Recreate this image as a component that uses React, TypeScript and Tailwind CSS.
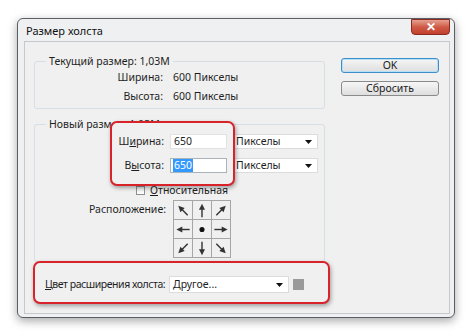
import type { ReactNode } from "react";

const ARROWS = [-45, 0, 45, -90, null, 90, -135, 180, 135];

const Arrow = ({ angle }: { angle: number | null }) => (
  <svg viewBox="0 0 19 19" className="h-[19px] w-[19px]">
    {angle === null ? (
      <circle cx="9.5" cy="9.5" r="2.7" fill="#111" />
    ) : (
      <g transform={`rotate(${angle} 9.5 9.5)`}>
        <line x1="9.5" y1="16.5" x2="9.5" y2="7" stroke="#333" strokeWidth="1.5" />
        <polygon points="9.5,2.5 6.3,8.8 12.7,8.8" fill="#333" />
      </g>
    )}
  </svg>
);

const Caret = () => (
  <svg viewBox="0 0 7 4" className="h-[4px] w-[7px]">
    <polygon points="0,0 7,0 3.5,4" fill="#111" />
  </svg>
);

const Select = ({ value, className }: { value: string; className: string }) => (
  <div
    className={`flex items-center justify-between border border-[#dcdcdc] bg-white pl-[3px] pr-[5px] ${className}`}
  >
    <span className="leading-none">{value}</span>
    <Caret />
  </div>
);

const Button = ({ children, primary }: { children: ReactNode; primary?: boolean }) => (
  <div
    className={`flex h-[15px] w-[98px] items-center justify-center rounded-[3px] border bg-gradient-to-b from-[#f6f6f6] to-[#dedede] leading-none text-[#1a1a1a] ${
      primary
        ? "border-[#3d8ec9] shadow-[inset_0_0_0_1px_#b6e0f5]"
        : "border-[#8a8a8a]"
    }`}
  >
    {children}
  </div>
);

export default function App() {
  return (
    <div
      className="h-[336px] w-[474px] overflow-hidden whitespace-nowrap bg-white pt-[18px] pl-[17px] text-[10.5px] text-[#1e1e1e]"
      style={{ fontFamily: '"Noto Sans", "Open Sans", sans-serif' }}
    >
      <div className="h-[300px] w-[438px] rounded-[6px] border border-[#5b5f64] bg-[#eef0f2] shadow-[0_3px_10px_rgba(0,0,0,0.35)]">
        {/* title bar */}
        <div className="flex h-[22px] items-start justify-between pl-[8px] pr-[4px]">
          <span className="mt-[6px] text-[11px] leading-none text-[#111]">Размер холста</span>
          <div className="flex h-[16px] w-[39px] items-center justify-center rounded-b-[4px] border border-[#8b2a22] bg-gradient-to-b from-[#e5a08f] via-[#cf5a46] to-[#c2402d]">
            <span className="text-[12px] font-bold leading-none text-white">✕</span>
          </div>
        </div>

        {/* client area */}
        <div className="ml-[6px] mr-[4px] flex h-[273px] border border-[#c6c9cc] bg-[#f0f0f0] pt-[12px]">
          <div className="ml-[9px] w-[291px]">
            <fieldset className="rounded-[3px] border border-[#d5dfe5] pb-[2px]">
              <legend className="ml-[11px] px-[3px] leading-[14px]">Текущий размер: 1,03M</legend>
              {[
                ["Ширина:", "600 Пикселы"],
                ["Высота:", "600 Пикселы"],
              ].map(([label, value]) => (
                <div key={label} className="flex h-[19px] items-center">
                  <span className="w-[128px] text-right">{label}</span>
                  <span className="ml-[10px]">{value}</span>
                </div>
              ))}
            </fieldset>

            <fieldset className="mt-[8px] h-[145px] rounded-[3px] border border-[#d5dfe5]">
              <legend className="ml-[11px] px-[3px] leading-[14px]">Новый размер: 1,03M</legend>
              <div className="-mt-[10px] flex items-start">
                <div className="relative z-10 ml-[75px] flex h-[65px] w-[125px] flex-col gap-[9px] rounded-[7px] border-2 border-[#d9232b] bg-[#f0f0f0] pt-[11px] shadow-[1px_2px_4px_rgba(0,0,0,0.35)]">
                  <div className="flex h-[15px] items-center">
                    <span className="w-[52px] text-right">
                      Ш<span className="underline">и</span>рина:
                    </span>
                    <div className="ml-[6px] flex h-[15px] w-[57px] items-center border border-[#e2e2e2] bg-white pl-[3px]">
                      650
                    </div>
                  </div>
                  <div className="flex h-[15px] items-center">
                    <span className="w-[52px] text-right">
                      В<span className="underline">ы</span>сота:
                    </span>
                    <div className="ml-[6px] flex h-[15px] w-[57px] items-center border border-[#a9b3bc] bg-white pl-[2px]">
                      <span className="bg-[#3399ff] px-[1px] leading-[13px] text-white">650</span>
                    </div>
                  </div>
                </div>
                <div className="-ml-[3px] mt-[13px] flex flex-col gap-[9px]">
                  <Select value="Пикселы" className="h-[15px] w-[86px]" />
                  <Select value="Пикселы" className="h-[15px] w-[86px]" />
                </div>
              </div>

              <div className="-mt-[2px] ml-[101px] flex h-[13px] items-center">
                <div className="h-[9px] w-[9px] border border-[#8e8f8f] bg-gradient-to-b from-[#e8e8e8] to-white" />
                <span className="ml-[5px]">
                  <span className="underline">О</span>тносительная
                </span>
              </div>

              <div className="mt-[3px] flex items-start">
                <span className="mt-[3px] w-[131px] text-right leading-[13px]">Расположение:</span>
                <div className="ml-[7px] grid grid-cols-3 border-t border-l border-[#a6a6a6]">
                  {ARROWS.map((a, i) => (
                    <div
                      key={i}
                      className="flex h-[19px] w-[19px] items-center justify-center border-r border-b border-[#a6a6a6]"
                    >
                      <Arrow angle={a} />
                    </div>
                  ))}
                </div>
              </div>
            </fieldset>

            <div className="relative z-10 -ml-[1px] -mt-[1px] flex h-[43px] w-[297px] items-center rounded-[7px] border-2 border-[#d9232b] bg-[#f0f0f0] pl-[10px] pt-[4px] shadow-[1px_2px_4px_rgba(0,0,0,0.35)]">
              <span className="w-[124px] tracking-[-0.45px]">
                <span className="underline">Ц</span>вет расширения холста:
              </span>
              <Select value="Другое..." className="h-[17px] w-[120px]" />
              <div className="ml-[4px] h-[11px] w-[11px] bg-[#9a9a9a]" />
            </div>
          </div>

          <div className="ml-[16px] mt-[4px] flex flex-col gap-[8px]">
            <Button primary>OK</Button>
            <Button>Сбросить</Button>
          </div>
        </div>
      </div>
    </div>
  );
}
